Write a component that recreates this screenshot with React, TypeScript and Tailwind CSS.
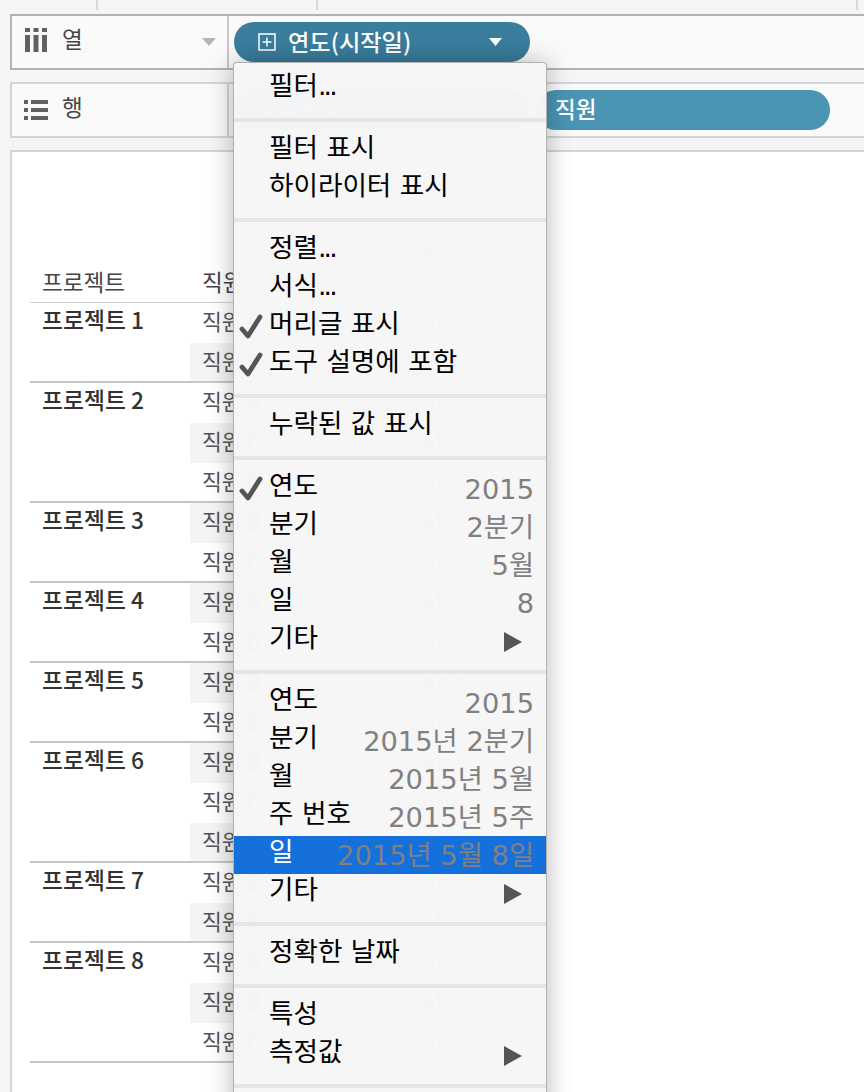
import React from "react";

type Item = { label: string; check?: boolean; value?: string; arrow?: boolean; active?: boolean };

const groups: Item[][] = [
  [{ label: "필터..." }],
  [{ label: "필터 표시" }, { label: "하이라이터 표시" }],
  [{ label: "정렬..." }, { label: "서식..." }, { label: "머리글 표시", check: true }, { label: "도구 설명에 포함", check: true }],
  [{ label: "누락된 값 표시" }],
  [
    { label: "연도", check: true, value: "2015" },
    { label: "분기", value: "2분기" },
    { label: "월", value: "5월" },
    { label: "일", value: "8" },
    { label: "기타", arrow: true },
  ],
  [
    { label: "연도", value: "2015" },
    { label: "분기", value: "2015년 2분기" },
    { label: "월", value: "2015년 5월" },
    { label: "주 번호", value: "2015년 5주" },
    { label: "일", value: "2015년 5월 8일", active: true },
    { label: "기타", arrow: true },
  ],
  [{ label: "정확한 날짜" }],
  [{ label: "특성" }, { label: "측정값", arrow: true }],
];

const projects: { name: string; members: string[] }[] = [
  { name: "프로젝트 1", members: ["A", "B"] },
  { name: "프로젝트 2", members: ["A", "C", "D"] },
  { name: "프로젝트 3", members: ["B", "C"] },
  { name: "프로젝트 4", members: ["A", "D"] },
  { name: "프로젝트 5", members: ["B", "E"] },
  { name: "프로젝트 6", members: ["B", "C", "D"] },
  { name: "프로젝트 7", members: ["E", "F"] },
  { name: "프로젝트 8", members: ["A", "B", "C"] },
];

function Check() {
  return (
    <svg width="24" height="26" viewBox="0 0 24 26" className="-ml-[2px] block">
      <path d="M3 15 L9 22 L21 3" fill="none" stroke="#555555" strokeWidth="4.8" strokeLinejoin="round" strokeLinecap="round" />
    </svg>
  );
}

function MenuRow({ item }: { item: Item }) {
  const dots = item.label.endsWith("...");
  return (
    <div className={`flex h-[38px] items-center pl-[7px] ${item.active ? "bg-[#1670dc]" : ""}`}>
      <div className="flex h-[38px] w-[28px] shrink-0 items-center">{item.check && <Check />}</div>
      <span className={`-translate-y-[3px] whitespace-nowrap text-[26.6px] leading-[38px] ${item.active ? "text-white" : "text-black"}`}>
        {dots ? item.label.slice(0, -3) : item.label}
        {dots && <span className="tracking-[-2.8px]">...</span>}
      </span>
      {item.value && (
        <span className="ml-auto translate-y-[1px] whitespace-nowrap pr-[12px] text-[27.3px] leading-[38px] text-[#808080]">{item.value}</span>
      )}
      {item.arrow && (
        <svg width="18" height="20" viewBox="0 0 18 20" className="ml-auto mr-[24px] translate-y-[1px]">
          <path d="M0 0 L18 10 L0 20 Z" fill="#555555" />
        </svg>
      )}
    </div>
  );
}

export default function App() {
  let rowIndex = 0;
  return (
    <div className="relative h-[1092px] w-[864px] overflow-hidden bg-[#f5f5f5] font-['Noto_Sans_CJK_KR',sans-serif]">
      {/* top strip */}
      <div className="flex h-[14px] items-start">
        <div className="ml-[96px] h-[10px] w-[2px] bg-[#d8d8d8]" />
        <div className="ml-[218px] h-[10px] w-[2px] bg-[#d8d8d8]" />
        <div className="ml-[538px] h-[10px] w-[2px] bg-[#d8d8d8]" />
      </div>

      {/* columns shelf */}
      <div className="ml-[10px] flex h-[56px] border-2 border-r-0 border-[#b3b3b3] bg-[#fafafa]">
        <div className="flex w-[215px] items-center pl-[13px]">
          <svg width="22" height="24" viewBox="0 0 22 24" fill="#606060" className="-translate-y-[2px]">
            <rect x="0" y="0" width="5" height="4" />
            <rect x="0" y="7" width="5" height="17" />
            <rect x="8.5" y="0" width="5" height="4" />
            <rect x="8.5" y="7" width="5" height="17" />
            <rect x="17" y="0" width="5" height="4" />
            <rect x="17" y="7" width="5" height="17" />
          </svg>
          <span className="ml-[15px] -translate-y-[3px] text-[22.5px] text-[#444444]">열</span>
          <svg width="14" height="8" viewBox="0 0 14 8" className="ml-[120px] -translate-x-[1px]">
            <path d="M0 0 H14 L7 8 Z" fill="#b5b5b5" />
          </svg>
        </div>
        <div className="w-[2px] bg-[#c8c8c8]" />
        <div className="pl-[5px] pt-[6px]">
          <div className="flex h-[40px] w-[296px] items-center rounded-[20px] bg-[#3a7d9d] pl-[24px] text-white">
            <svg width="18" height="18" viewBox="0 0 18 18" fill="none" stroke="#ffffff" strokeWidth="1.5">
              <rect x="1" y="1" width="16" height="16" />
              <path d="M9 4.5 V13.5 M4.5 9 H13.5" />
            </svg>
            <span className="ml-[12px] w-[201px] -translate-y-[1px] whitespace-nowrap text-[23.2px] font-medium leading-[40px]">연도(시작일)</span>
            <svg width="13" height="8" viewBox="0 0 13 8">
              <path d="M0 0 H13 L6.5 8 Z" fill="#ffffff" />
            </svg>
          </div>
        </div>
      </div>

      {/* rows shelf */}
      <div className="ml-[10px] mt-[12px] flex h-[56px] border-2 border-r-0 border-[#d4d4d4] bg-[#fafafa]">
        <div className="flex w-[215px] items-center pl-[12px]">
          <svg width="24" height="20" viewBox="0 0 24 20" fill="#606060">
            <rect x="0" y="0" width="4" height="4" />
            <rect x="7" y="0" width="17" height="4" />
            <rect x="0" y="8" width="4" height="4" />
            <rect x="7" y="8" width="17" height="4" />
            <rect x="0" y="16" width="4" height="4" />
            <rect x="7" y="16" width="17" height="4" />
          </svg>
          <span className="ml-[14px] -translate-y-[3px] text-[22.5px] text-[#444444]">행</span>
        </div>
        <div className="w-[2px] bg-[#d4d4d4]" />
        <div className="flex gap-[6px] pl-[5px] pt-[6px]">
          <div className="flex h-[40px] w-[296px] items-center rounded-[20px] bg-[#4a95b4] pl-[22px] text-[23px] text-white">프로젝트</div>
          <div className="flex h-[40px] w-[294px] items-center rounded-[20px] bg-[#4a95b4] pl-[19px] text-[22.5px] font-medium leading-[40px] text-white">
            <span className="-translate-y-[2px]">직원</span>
          </div>
        </div>
      </div>

      {/* canvas */}
      <div className="ml-[10px] mt-[12px] h-[942px] border-l-2 border-t-2 border-[#d4d4d4] bg-white pl-[18px]">
        <div className="flex h-[150px] w-[441px] flex-col">
          <div className="ml-[348px] mt-[75px] h-[30px] text-[22px] leading-[30px] text-[#777777]">시작일</div>
          <div className="flex h-[45px] -translate-y-[1px] items-center pt-[6px] text-[22.6px] text-[#444444]">
            <span className="ml-[12px] w-[160px]">프로젝트</span>
            <span className="w-[203px] text-[#444444]">직원</span>
            <span className="text-[24px] text-[#888888]">2017</span>
          </div>
        </div>
        <div className="w-[441px] border-t border-[#d0d0d0]">
          {projects.map((p) => (
            <div key={p.name} className="flex border-b-2 border-[#c6c6c6]">
              <div className="w-[160px] whitespace-nowrap pl-[12px] text-[22.8px] font-medium leading-[34px] text-[#333333]">
                {p.name}
              </div>
              <div className="flex-1">
                {p.members.map((m, mi) => {
                  const grey = rowIndex++ % 2 === 1;
                  const last = mi === p.members.length - 1;
                  return (
                    <div
                      key={m}
                      className={`flex items-start pl-[12px] text-[21.5px] leading-[36px] text-[#555555] ${last ? "h-[38px]" : "h-[40px]"} ${grey ? "bg-[#f4f4f4]" : ""}`}
                    >
                      <span className="w-[219px] whitespace-nowrap">직원 {m}</span>
                      <span className="text-[24px] text-[#999999]">Abc</span>
                    </div>
                  );
                })}
              </div>
            </div>
          ))}
        </div>
      </div>

      {/* context menu */}
      <div className="absolute left-[233px] top-[62px] h-[1060px] w-[314px] rounded-t-[4px] border-x border-t border-[#b0b0b0] bg-[#f6f6f6]/[0.98] pt-[7px] font-['DejaVu_Sans','Noto_Sans_CJK_KR',sans-serif] shadow-[0_0_26px_rgba(0,0,0,0.28)]">
        {groups.map((g, i) => (
          <div key={i}>
            <div className={i === 0 ? "pb-[10px]" : "py-[10px]"}>
              {g.map((it, j) => (
                <MenuRow key={j} item={it} />
              ))}
            </div>
            <div className="h-[4px] bg-[#e5e5e5]" />
          </div>
        ))}
      </div>
    </div>
  );
}
